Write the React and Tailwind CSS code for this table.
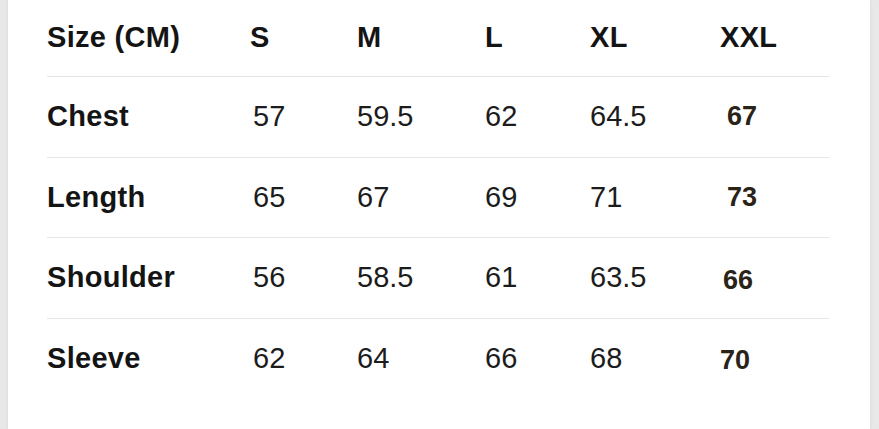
import React from "react";

const sizes = ["S", "M", "L", "XL", "XXL"];

const rows = [
  { name: "Chest", values: ["57", "59.5", "62", "64.5"], last: "67", h: "h-[81px]", nudge: "pl-[7px] pb-[2px]" },
  { name: "Length", values: ["65", "67", "69", "71"], last: "73", h: "h-[80px]", nudge: "pl-[7px] pb-[1px]" },
  { name: "Shoulder", values: ["56", "58.5", "61", "63.5"], last: "66", h: "h-[81px]", nudge: "pl-[3px] pt-[4px]" },
  { name: "Sleeve", values: ["62", "64", "66", "68"], last: "70", h: "h-[80px]", nudge: "pt-[3px]" },
];

const cols = "grid grid-cols-[203px_107px_128px_105px_130px_1fr] items-center";

const App = () => {
  return (
    <div
      className="h-[429px] w-full bg-[#e8e8e8] flex"
      style={{ fontFamily: '"Liberation Sans", Arial, sans-serif' }}
    >
      <div className="flex-1 ml-[8px] mr-[9px] bg-white shadow-[0_0_4px_rgba(0,0,0,0.08)] pl-[39px] pr-[41px]">
        {/* header */}
        <div className={`${cols} h-[77px] border-b border-[#e5e5e5] text-[29px] font-bold tracking-[0.3px] text-[#141414]`}>
          <div>Size (CM)</div>
          {sizes.map((s) => (
            <div key={s}>{s}</div>
          ))}
        </div>

        {rows.map((row, i) => (
          <div
            key={row.name}
            className={`${cols} ${row.h} ${i < rows.length - 1 ? "border-b border-[#e5e5e5]" : ""}`}
          >
            <div className="text-[29px] font-bold tracking-[0.3px] text-[#141414]">{row.name}</div>
            {row.values.map((v, j) => (
              <div key={j} className={`text-[29px] text-[#1c1c1c] ${j === 0 ? "pl-[3px]" : ""}`}>
                {v}
              </div>
            ))}
            <div className={`text-[27px] font-bold text-[#2a2317] ${row.nudge}`}>{row.last}</div>
          </div>
        ))}
      </div>
    </div>
  );
};

export default App;
